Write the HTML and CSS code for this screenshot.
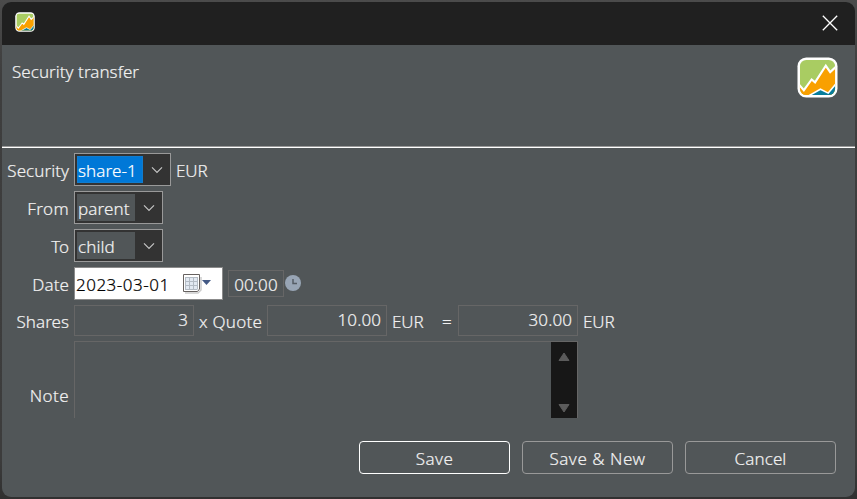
FILE: index.html
```html
<!DOCTYPE html>
<html lang="en">
<head>
<meta charset="utf-8">
<title>Security transfer</title>
<link rel="stylesheet" href="styles.css">
</head>
<body>
<svg width="0" height="0" class="defs">
  <symbol id="logo" viewBox="0 0 42 42">
    <rect x=".5" y=".5" width="41" height="41" rx="9" fill="#fff"/>
    <clipPath id="tile"><rect x="3" y="3" width="36" height="36" rx="6.5"/></clipPath>
    <g clip-path="url(#tile)">
      <rect x="3" y="3" width="36" height="36" fill="#a9cc62"/>
      <path d="M0 26L7 34L15 23L18.5 26L29.5 9L34 15.5L42 8V46H0Z" fill="#f9a000" stroke="#fff" stroke-width="2.2"/>
      <path d="M8 42L24 33L32 37L42 25V46H8Z" fill="#087d9b" stroke="#fff" stroke-width="1.6"/>
    </g>
  </symbol>
  <symbol id="chevron" viewBox="0 0 12 8"><path d="M1 1.3L6 6.3L11 1.3" fill="none" stroke="#c5c5c5" stroke-width="1.2"/></symbol>
</svg>
<main class="dialog">
  <div class="titlebar">
    <svg class="app-icon"><use href="#logo"/></svg>
    <svg class="close" viewBox="0 0 16 16"><path d="M.8.8L15.2 15.2M15.2.8L.8 15.2" stroke="#fff" stroke-width="1.3"/></svg>
  </div>
  <header class="header">
    <span class="heading">Security transfer</span>
    <svg class="logo"><use href="#logo"/></svg>
  </header>
  <section class="form">
    <div class="row"><label class="t-security">Security</label>
      <div class="combo wide"><span class="value selected t-share">share-1</span><span class="drop"><svg><use href="#chevron"/></svg></span></div>
      <span class="unit eur">EUR</span></div>
    <div class="row"><label class="t-from">From</label>
      <div class="combo"><span class="value t-parent">parent</span><span class="drop"><svg><use href="#chevron"/></svg></span></div></div>
    <div class="row"><label>To</label>
      <div class="combo"><span class="value t-child">child</span><span class="drop"><svg><use href="#chevron"/></svg></span></div></div>
    <div class="row"><label class="t-date">Date</label>
      <div class="date"><span>2023-03-01</span>
        <svg class="calendar" viewBox="0 0 29 20">
          <path d="M2 19H15L18 16V3" fill="none" stroke="#ccc" stroke-width="1.5"/>
          <path d="M.5 .5H16.5V15L14.5 17.5H.5Z" fill="#fff" stroke="#66615f"/>
          <path d="M2 3H15V15H2Z" fill="#e2e9f2"/>
          <path d="M2.5 3V15.5M6.5 3V15.5M10.5 3V15.5M14.5 3V15.5M2 3.5H15M2 7.5H15M2 11.5H15M2 15.5H14" stroke="#b3bbc4"/>
          <path d="M19 6H28L23.5 11Z" fill="#435985"/>
        </svg></div>
      <div class="time">00:00</div>
      <svg class="clock" viewBox="0 0 16 16"><circle cx="8" cy="8" r="8" fill="#98a5b5"/><path d="M8 4V8.5H12" fill="none" stroke="#555d66" stroke-width="1.5"/></svg></div>
    <div class="row amounts"><label class="t-shares">Shares</label>
      <div class="field">3</div><span class="quote">x Quote</span>
      <div class="field">10.00</div><span class="unit eur">EUR</span><span class="equals">=</span>
      <div class="field">30.00</div><span class="unit eur">EUR</span></div>
    <div class="row note"><label class="t-note">Note</label>
      <div class="textarea"><div class="scrollbar">
        <svg viewBox="0 0 12 10"><path d="M6 1L11 8.5H1Z" fill="#5b5b5b" stroke="#5b5b5b" stroke-linejoin="round"/></svg>
        <svg viewBox="0 0 12 10"><path d="M1 1.5H11L6 9Z" fill="#5b5b5b" stroke="#5b5b5b" stroke-linejoin="round"/></svg>
      </div></div></div>
  </section>
  <footer class="actions">
    <button class="primary t-save">Save</button><button class="t-new">Save &amp; New</button><button class="t-cancel">Cancel</button>
  </footer>
</main>
</body>
</html>
```
FILE: styles.css
```css
* { box-sizing: border-box; }
body {
  margin: 0; width: 857px; height: 499px; padding: 2px; overflow: hidden;
  background: linear-gradient(#4b4b4b, #3e3e3e 15%, #3c3c3c 92%, #303030);
  font: 17px/31px "Noto Sans", "Open Sans", sans-serif; font-weight: 350; color: #f1f1f1;
  -webkit-text-stroke: .2px;
}
.defs { position: absolute; }
svg { display: block; flex: none; }
.dialog { width: 853px; height: 495px; background: #515658; border-radius: 9px; overflow: hidden; display: flex; flex-direction: column; }
.titlebar { height: 43px; flex: none; background: #202020; display: flex; justify-content: space-between; padding: 10px 17px 0 13px; }
.app-icon { width: 20px; height: 20px; }
.close { width: 16px; height: 16px; margin-top: 3px; }
.header { height: 103px; flex: none; display: flex; justify-content: space-between; padding: 12px 17px 0 10px; border-bottom: 1px solid #fff; box-shadow: inset 0 -1px #999; }
.heading { letter-spacing: .04px; margin-top: -1px; }
.logo { width: 41px; height: 41px; }
.form { padding-top: 5px; display: flex; flex-direction: column; gap: 5px; }
.row { height: 33px; display: flex; white-space: nowrap; }
label { width: 67px; margin-right: 5px; text-align: right; padding-top: 2px; flex: none; }
.combo { width: 89px; height: 33px; border: 1px solid #999; padding: 1px; display: flex; background: #333; }
.combo.wide { width: 97px; }
.value { flex: 1; padding: 1px 0 0 1px; margin: 1px 0 1px 1px; line-height: 28px; overflow: hidden; background: #515658; }
.selected { background: #0078d7; color: #fff; box-shadow: inset 0 0 0 1px #117ccd; }
.drop { width: 26px; background: #333; display: flex; justify-content: center; padding: 11px 0 0 2px; flex: none; }
.drop svg { width: 12px; height: 8px; }
.unit { margin-left: 5px; padding-top: 2px; }
.eur { width: 33px; letter-spacing: -.1px; }
.date { width: 149px; background: #fff; border: 1px solid #8b8b8b; color: #000; display: flex; justify-content: space-between; padding: 1px 10px 0 1px; letter-spacing: .5px; }
.calendar { width: 29px; height: 20px; margin-top: 5px; }
.time { width: 56px; height: 27px; margin: 3px 1px 0 5px; border: 1px solid #666; line-height: 27px; text-align: center; letter-spacing: .1px; }
.clock { width: 16px; height: 16px; margin-top: 8px; }
.amounts { height: 31px; }
.field { width: 120px; height: 31px; border: 1px solid #666; text-align: right; padding-right: 5px; line-height: 28px; letter-spacing: .1px; }
.quote { width: 68px; margin-left: 5px; padding-top: 1px; letter-spacing: .25px; }
.amounts .unit, .amounts label { padding-top: 1px; }
.equals { width: 33px; padding: 1px 0 0 17px; }
.note { height: 77px; }
.note label { padding-top: 39px; }
.textarea { width: 504px; border: 1px solid #666; border-bottom: 0; display: flex; justify-content: flex-end; }
.scrollbar { width: 26px; background: #171717; display: flex; flex-direction: column; justify-content: space-between; align-items: center; padding: 10px 0 5px; }
.scrollbar svg { width: 12px; height: 10px; }
.actions { display: flex; gap: 12px; justify-content: flex-end; padding: 23px 19px 0 0; }
button { width: 151px; height: 33px; padding: 2px 0 0; border: 1px solid #999; border-radius: 4px; background: transparent; color: inherit; font: inherit; line-height: 29px; }
.primary { border-color: #fff; }
.t-security, .t-shares { letter-spacing: .05px; }
.t-share, .t-parent { letter-spacing: .1px; }
.t-cancel, .t-child, .t-date { letter-spacing: .1px; }
.t-note, .t-from, .t-save { letter-spacing: .4px; }
.t-new { letter-spacing: .55px; }
```
